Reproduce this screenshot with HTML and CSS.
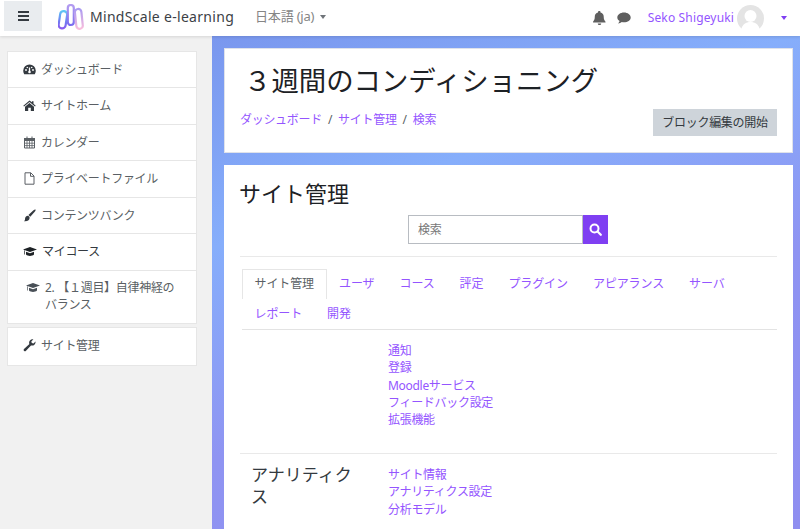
FILE: index.html
```html
<!DOCTYPE html>
<html lang="ja">
<head>
<meta charset="utf-8">
<title>3週間のコンディショニング</title>
<link rel="stylesheet" href="styles.css">
</head>
<body>
<header class="topbar">
  <button class="menu-btn" aria-label="menu">
    <svg width="11" height="10" viewBox="0 0 11 10"><path d="M0 0h11v2H0zM0 4h11v2H0zM0 8h11v2H0z" fill="#343a40"/></svg>
  </button>
  <svg class="logo" width="26" height="26" viewBox="0 0 26 26" fill="none" stroke-width="2.200">
    <defs>
      <linearGradient id="lg1" x1="0" y1="0" x2="0" y2="1">
        <stop offset="0" stop-color="#5fc8f5"/><stop offset="0.6" stop-color="#6f7cf2"/><stop offset="1" stop-color="#8b5cf0"/>
      </linearGradient>
      <linearGradient id="lg2" x1="0" y1="0" x2="0" y2="1">
        <stop offset="0" stop-color="#b49cf0"/><stop offset="1" stop-color="#7a6cf0"/>
      </linearGradient>
      <linearGradient id="lg3" x1="0" y1="0" x2="0" y2="1">
        <stop offset="0" stop-color="#a99af2"/><stop offset="1" stop-color="#f9bddd"/>
      </linearGradient>
    </defs>
    <rect x="1.500" y="7" width="7" height="17.500" rx="3.500" stroke="url(#lg1)" transform="rotate(8 5 15)"/>
    <rect x="9.800" y="1" width="6" height="20" rx="3" stroke="url(#lg2)"/>
    <rect x="17.500" y="5" width="6.500" height="20" rx="3.250" stroke="url(#lg3)" transform="rotate(-6 20 14)"/>
  </svg>
  <span class="brand">MindScale e-learning</span>
  <span class="lang">日本語 (ja)<i class="caret grey"></i></span>
  <span class="spacer"></span>
  <svg class="ic-bell" width="13" height="14" viewBox="0 0 13 14"><path d="M6.500 0c.6 0 1 .5 1 1v.6c2 .4 3.200 2 3.200 4 0 3 .8 4 1.800 5.100.3.400 0 .9-.5.900H.5c-.5 0-.8-.5-.5-.9C1 9.600 1.800 8.600 1.800 5.600c0-2 1.200-3.600 3.200-4V1c0-.5.400-1 1.500-1zM4.800 12.400h3.400c0 1-.8 1.600-1.700 1.600s-1.700-.6-1.700-1.600z" fill="#5f5f5f"/></svg>
  <svg class="ic-chat" width="14" height="12" viewBox="0 0 14 12"><path d="M7 .5c3.700 0 6.700 2.200 6.700 4.900S10.700 10.300 7 10.300c-.8 0-1.500-.1-2.200-.3-1 .8-2.200 1.400-3.800 1.500.8-.8 1.400-1.700 1.600-2.600C1.100 8 .3 6.800.3 5.400.3 2.700 3.300.5 7 .5z" fill="#5f5f5f"/></svg>
  <span class="user">Seko Shigeyuki</span>
  <span class="avatar">
    <svg width="27" height="27" viewBox="0 0 27 27"><circle cx="13.500" cy="13.500" r="13.500" fill="#e4e4e4"/><circle cx="13.500" cy="11" r="6" fill="#fff"/><path d="M4 25c1.500-6 5-8 9.500-8s8 2 9.500 8a13.500 13.500 0 0 1-19 0z" fill="#fff"/></svg>
  </span>
  <i class="caret purple"></i>
</header>

<div class="page">
  <aside class="sidebar">
    <nav class="side-card">
      <a class="side-item">
        <svg class="side-ic" width="13" height="13" viewBox="0 0 13 13"><path d="M6.500 1.500A6.300 6.300 0 0 0 .2 7.800c0 1.300.4 2.400 1 3.400h10.600c.6-1 1-2.100 1-3.400a6.300 6.300 0 0 0-6.300-6.300z" fill="#343a40"/><path d="M6.500 8V4.500" stroke="#fff" stroke-width="1.300"/><circle cx="6.500" cy="9" r="1.300" fill="#fff"/><circle cx="3" cy="7" r=".9" fill="#fff"/><circle cx="10" cy="7" r=".9" fill="#fff"/><circle cx="4.300" cy="4.500" r=".8" fill="#fff"/><circle cx="8.700" cy="4.500" r=".8" fill="#fff"/></svg>
        <span>ダッシュボード</span>
      </a>
      <a class="side-item">
        <svg class="side-ic" width="13" height="13" viewBox="0 0 13 13"><path d="M6.500 1.500L.3 6.700l.7.800 5.500-4.600 5.500 4.600.7-.8-2.200-1.900V2.200H9v1.100zM6.500 4L2 7.700V12h3.200V8.800h2.600V12H11V7.700z" fill="#343a40"/></svg>
        <span>サイトホーム</span>
      </a>
      <a class="side-item">
        <svg class="side-ic" width="13" height="13" viewBox="0 0 13 13"><path d="M1.500 2.500h10v9.500h-10z" fill="none" stroke="#5a5f64"/><path d="M1 2h11v3H1zM3.500.5h1v2.500h-1zM8.500.5h1v2.500h-1z" fill="#5a5f64"/><path d="M1.500 7.200h10M1.500 9.600h10M4 5v7M6.500 5v7M9 5v7" stroke="#5a5f64" stroke-width=".8"/></svg>
        <span>カレンダー</span>
      </a>
      <a class="side-item">
        <svg class="side-ic" width="13" height="13" viewBox="0 0 13 13"><path d="M2 .8h5.800L11 4v8.200H2z M7.500 .8V4.300H11" fill="none" stroke="#5a5f64" stroke-width="1"/></svg>
        <span>プライベートファイル</span>
      </a>
      <a class="side-item">
        <svg class="side-ic" width="13" height="13" viewBox="0 0 13 13"><path d="M12.500.5c.4.400 0 1.300-1 2.500L7.300 7.800 5.400 6 10.200 1.600C11.300.6 12.100.2 12.500.5zM4.800 6.800c1 .1 1.800.9 1.800 2C6.600 11 5 12.500 1 12.200c.8-.6 1-1.300 1-2.200 0-1.700 1.200-3.200 2.800-3.200z" fill="#343a40"/></svg>
        <span>コンテンツバンク</span>
      </a>
      <a class="side-item strong">
        <svg class="side-ic" width="14" height="13" viewBox="0 0 14 13"><path d="M7 2L0 4.500 7 7l7-2.500zM3 6.800v2.700c1 1 2.500 1.400 4 1.400s3-.4 4-1.400V6.800L7 8.300zM1 5.200v4.300h.7V5.500z" fill="#1d2125"/></svg>
        <span>マイコース</span>
      </a>
      <a class="side-item sub">
        <svg class="side-ic" width="14" height="13" viewBox="0 0 14 13"><path d="M7 2L0 4.500 7 7l7-2.500zM3 6.800v2.700c1 1 2.500 1.400 4 1.400s3-.4 4-1.400V6.800L7 8.300zM1 5.200v4.300h.7V5.500z" fill="#495057"/></svg>
        <span>2. 【１週目】自律神経のバランス</span>
      </a>
    </nav>
    <nav class="side-card">
      <a class="side-item">
        <svg class="side-ic" width="13" height="13" viewBox="0 0 13 13"><path d="M12.600 3a3.500 3.500 0 0 1-4.600 3.400L3 11.800a1.300 1.300 0 0 1-2-1.700l5.400-5A3.500 3.500 0 0 1 10.400.3L8.300 2.400l.5 1.700 1.700.5L12.500 2.600c.1.100.1.300.1.400z" fill="#343a40"/></svg>
        <span>サイト管理</span>
      </a>
    </nav>
  </aside>

  <main class="content">
    <section class="card head-card">
      <h1 class="course-title">３週間のコンディショニング</h1>
      <div class="head-row">
        <ol class="crumbs">
          <li><a>ダッシュボード</a></li>
          <li class="sep">/</li>
          <li><a>サイト管理</a></li>
          <li class="sep">/</li>
          <li><a>検索</a></li>
        </ol>
        <button class="edit-btn">ブロック編集の開始</button>
      </div>
    </section>

    <section class="card body-card">
      <h2 class="page-title">サイト管理</h2>
      <form class="search">
        <input class="search-input" type="text" placeholder="検索">
        <button class="search-btn" type="button" aria-label="search">
          <svg width="13" height="13" viewBox="0 0 13 13"><circle cx="5.500" cy="5.500" r="4" fill="none" stroke="#fff" stroke-width="2"/><path d="M8.500 8.500l3.300 3.300" stroke="#fff" stroke-width="2.200" stroke-linecap="round"/></svg>
        </button>
      </form>
      <hr class="rule">
      <ul class="tabs">
        <li class="tab active">サイト管理</li>
        <li class="tab">ユーザ</li>
        <li class="tab">コース</li>
        <li class="tab">評定</li>
        <li class="tab">プラグイン</li>
        <li class="tab">アピアランス</li>
        <li class="tab">サーバ</li>
        <li class="tab">レポート</li>
        <li class="tab">開発</li>
      </ul>
      <div class="group first">
        <h3 class="group-title"></h3>
        <ul class="links">
          <li>通知</li>
          <li>登録</li>
          <li>Moodleサービス</li>
          <li>フィードバック設定</li>
          <li>拡張機能</li>
        </ul>
      </div>
      <div class="group">
        <h3 class="group-title">アナリティクス</h3>
        <ul class="links">
          <li>サイト情報</li>
          <li>アナリティクス設定</li>
          <li>分析モデル</li>
        </ul>
      </div>
    </section>
  </main>
</div>
</body>
</html>
```

FILE: styles.css
```css
* { box-sizing: border-box; }
html, body { margin: 0; height: 529px; overflow: hidden; }
body {
  font-family: "Noto Sans", "Noto Sans CJK JP", sans-serif;
  font-size: 12px;
  letter-spacing: -.3px;
  line-height: 17.500px;
  color: #343a40;
  background: #f1f1f1;
}
a { color: inherit; text-decoration: none; }
ul, ol { list-style: none; margin: 0; padding: 0; }

.topbar {
  height: 36px;
  display: flex;
  align-items: center;
  background: #fff;
  box-shadow: 0 1px 3px rgba(0,0,0,.12);
  position: relative;
  padding-left: 4px;
}
.menu-btn {
  width: 38px;
  height: 30px;
  border: 0;
  background: #e9ecef;
  display: flex;
  align-items: center;
  justify-content: center;
  padding: 0;
  align-self: flex-start;
  margin-top: 1px;
}
.logo { margin-left: 16px; margin-top: -2px; }
.brand { margin-left: 6px; font-size: 14px; letter-spacing: .3px; color: #3c4146; margin-top: -3px; }
.lang { margin-left: 21px; color: #858585; font-size: 13px; letter-spacing: -.2px; display: flex; align-items: center; margin-top: -2px; }
.caret { display: inline-block; width: 0; height: 0; border: 3.500px solid transparent; border-bottom: 0; border-top: 4px solid; }
.caret.grey { color: #6f7479; margin-left: 6px; }
.caret.purple { color: #7f3ff2; margin: 0 13px 0 17px; }
.spacer { flex: 1; }
.ic-chat { margin-left: 11px; }
.user { margin-left: 17px; color: #9455ff; font-size: 12px; letter-spacing: .15px; }
.avatar { margin-left: 3px; width: 27px; height: 27px; }

.page { display: flex; height: 493px; }
.sidebar { width: 212px; padding: 14.700px 15px 0 7px; flex: none; }
.side-card { background: #fff; border: 1px solid #e6e6e6; margin-bottom: 3.700px; }
.side-item { display: flex; gap: 5px; padding: 9px 10px 9px 15px; min-height: 36.400px; border-bottom: 1px solid #e6e6e6; color: #5a5f64; align-items: flex-start; }
.side-item:last-child { border-bottom: 0; }
.side-item.strong { color: #343a40; }
.side-item.sub { padding: 8px 15px 9px 18px; }
.side-ic { flex: none; margin-top: 2px; }

.content {
  flex: 1;
  padding: 12px 7px 0 12px;
  background: linear-gradient(160deg, #7a97ee 0%, #86aefb 30%, #8f94f2 60%, #8f8ef0 100%);
  overflow: hidden;
}
.card { background: #fff; }
.head-card { height: 105px; padding: 0 16px; margin-bottom: 12px; position: relative; border: 1px solid #dfe2ea; }
.course-title { margin: 0; padding: 12px 0 0 3px; font-size: 27.400px; letter-spacing: 0; line-height: 40px; font-weight: 400; color: #1d2125; }
.head-row { display: flex; justify-content: space-between; align-items: flex-start; margin-top: 6px; }
.crumbs { display: flex; gap: 6px; color: #9455ff; margin-top: 4px; margin-left: -1px; }
.crumbs .sep { color: #5a5f64; }
.edit-btn { border: 0; background: #ced4da; color: #343a40; font: inherit; letter-spacing: -.3px; width: 124px; height: 27px; padding: 0; margin-top: 2px; margin-right: -1px; }

.body-card { padding: 14px 16px 0; height: 400px; }
.page-title { margin: 0 0 0 -1px; font-size: 22px; letter-spacing: 0; line-height: 29px; font-weight: 400; color: #1d2125; }
.search { display: flex; justify-content: center; margin-top: 7px; margin-left: -1px; }
.search-input { width: 175px; height: 29px; border: 1px solid #b8bcc2; padding: 0 9px; font: inherit; letter-spacing: -.3px; border-radius: 0; }
.search-input::placeholder { color: #777; }
.search-btn { width: 25px; height: 29px; border: 0; background: #7f3ff2; display: flex; align-items: center; justify-content: center; padding: 0; }
.rule { border: 0; border-top: 1px solid #e9e9e9; margin: 12px 0 0; }
.tabs { display: flex; flex-wrap: wrap; margin: 12px 0 0 2px; border-bottom: 1px solid #e3e3e3; color: #9455ff; letter-spacing: -.1px; width: 535px; }
.tab { padding: 6px 12.500px; height: 30px; }
.tab.active { border: 1px solid #e6e6e6; border-bottom: 0; color: #5a5f64; padding: 5px 11.500px; background: #fff; }
.group { display: flex; padding: 12.500px 11px 24px; border-top: 1px solid #e9e9e9; }
.group.first { border-top: 0; padding-top: 12px; }
.group-title { margin: -2px 0 0; width: 137px; flex: none; font-size: 17px; letter-spacing: 0; line-height: 21.500px; font-weight: 400; color: #343a40; padding-right: 24px; }
.links { color: #9455ff; line-height: 17.330px; }
```
